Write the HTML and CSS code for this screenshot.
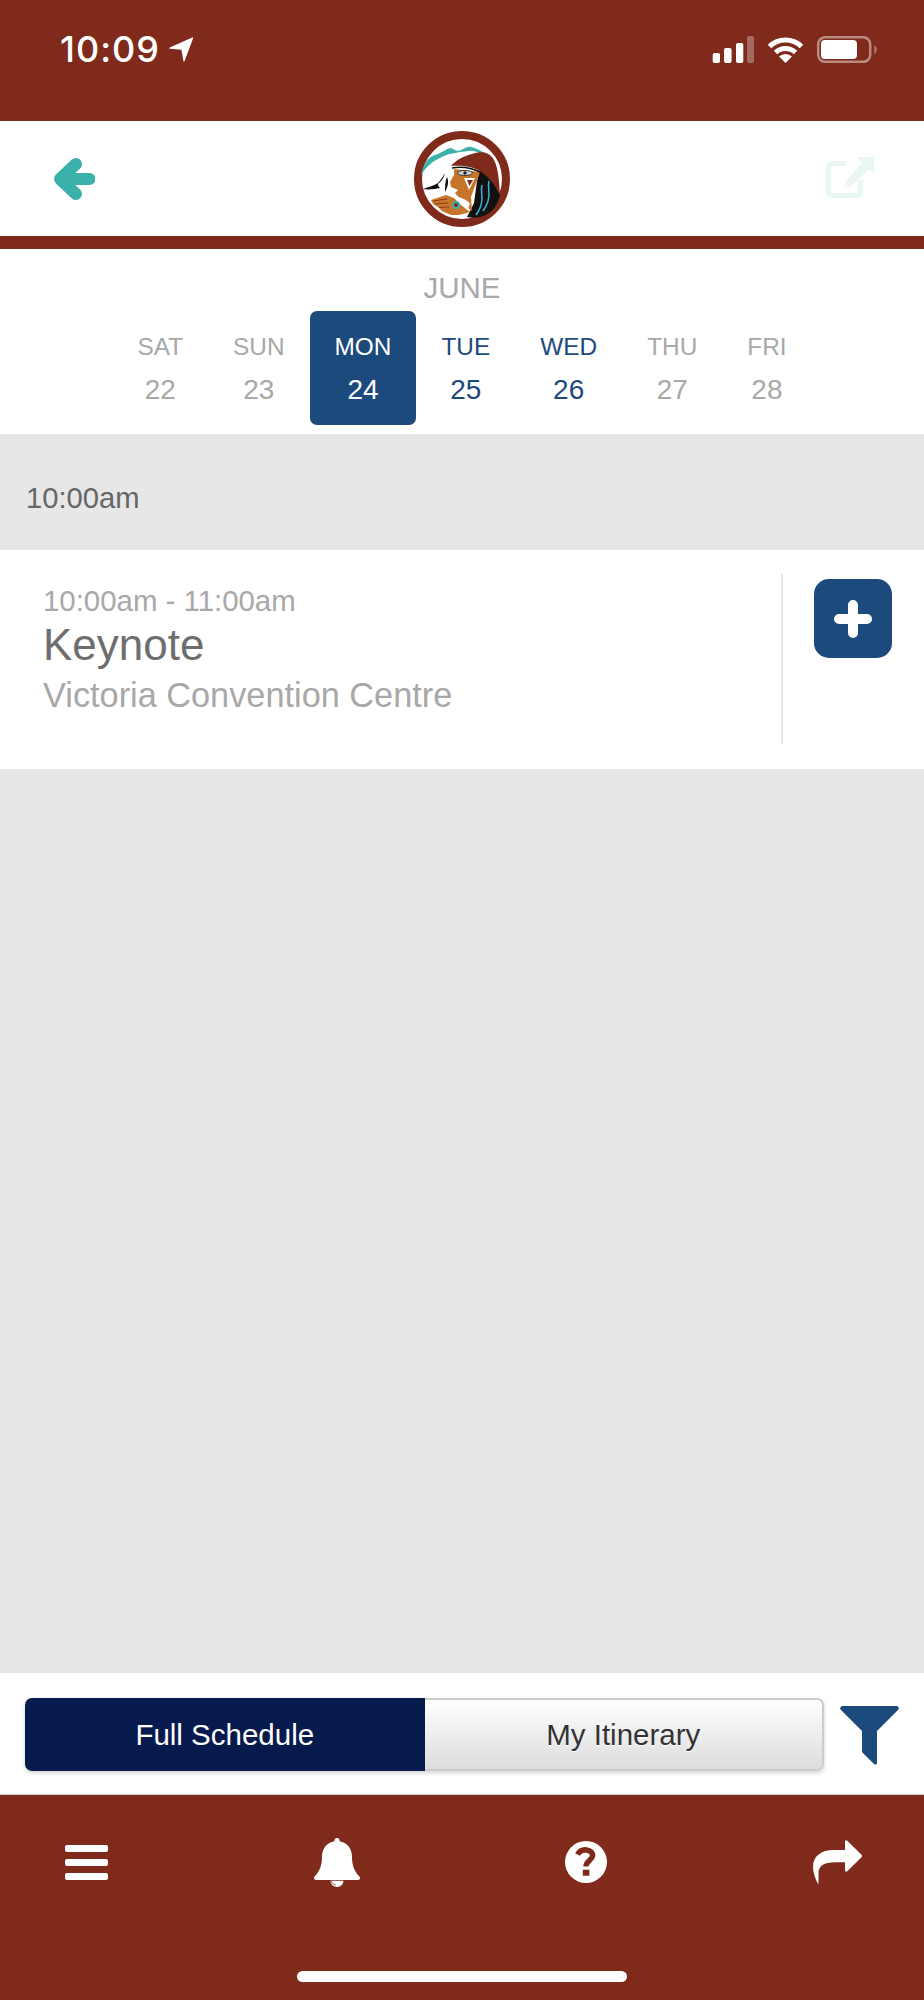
FILE: index.html
```html
<!DOCTYPE html>
<html lang="en">
<head>
<meta charset="utf-8">
<title>Schedule</title>
<link rel="stylesheet" href="styles.css">
</head>
<body>
<div class="app">
  <div class="status">
    <div class="status-left">
      <span class="clock">10:09</span>
      <svg class="loc" viewBox="0 0 24 25"><path d="M23.200 .4 Q24.400 .2 24 1.500 L15.600 24 Q14.800 25.500 14.400 24 L12.400 12.800 L1 11.800 Q-.6 11.400 .8 10.500Z"/></svg>
    </div>
    <svg class="status-right" viewBox="0 0 165 27">
      <rect class="w" x=".7" y="17" width="7.300" height="10" rx="2"/>
      <rect class="w" x="12" y="12" width="7.600" height="15" rx="2"/>
      <rect class="w" x="24" y="7" width="7.300" height="20" rx="2"/>
      <rect class="dim" x="35" y="0" width="7" height="27" rx="2"/>
      <path class="wifi" d="M57.500 10.500 A23 23 0 0 1 89.500 10.500"/>
      <path class="wifi" d="M63.500 16.500 A14.500 14.500 0 0 1 83.500 16.500"/>
      <path class="w" d="M67 20.500 A9.500 9.500 0 0 1 80 20.500 L73.500 27Z"/>
      <rect class="batt" x="106.200" y="1.200" width="52" height="24.600" rx="7"/>
      <rect class="w" x="109" y="4" width="36" height="19" rx="4"/>
      <path class="dim" d="M162 9 Q165 10.500 165 13.500 Q165 16.500 162 18Z"/>
    </svg>
  </div>

  <header class="topbar">
    <svg class="back" viewBox="0 0 41 44"><path d="M35.500 22 H6.500 M22 7 L6 22 L22 37"/></svg>
    <svg class="logo" viewBox="0 0 96 96">
      <circle class="logo-disc" cx="48" cy="48" r="44"/>
      <path class="logo-teal" d="M7 44 C9 34 14 26 21 24 C27 22 32 18 36 17 C39 17 41 20 44 20 C49 19 53 15 57 16 C62 17 68 20 74 24 L72 25 C66 22 60 19 54 20 C46 21 34 22 24 28 C16 32 11 38 7 44Z"/>
      <path class="logo-black" d="M9 58 C15 56 20 54.500 24 52 C27 49 29 45 31 42 C30 46 28 50 24 53 C24 55 25 56 26 57 C21 58 15 59 9 58Z"/>
      <path class="logo-black" d="M33 46 C35 50 34 56 31 61 C31 56 31 50 33 46Z"/>
      <path class="logo-black" d="M66 39 L80 48 L86 64 C84 74 78 82 69 85 C63 87 58 87 53 86 L60 72 L63 50Z"/>
      <path class="logo-blue" d="M68 54 C66 62 70 66 67 74 C66 78 64 81 62 84 M75 50 C73 58 77 62 74 70 C73 74 71 77 69 80"/>
      <path class="logo-orange" d="M40 38 L66 41 L62 52 L57 66 L58 80 L50 74 L47 69 L41 62 L44 59 L37 56 L36 51 L40 44Z"/>
      <path class="logo-hood" d="M37 35 C42 29 50 25 58 23 C66 20 74 21 78 26 C84 33 85 48 86 64 L83 59 C79 51 73 45 66 40 C58 35 47 34 37 35Z"/>
      <path class="logo-line" d="M38 37 C48 35 58 37 66 41"/>
      <ellipse class="logo-eye" cx="51" cy="42" rx="7.500" ry="2.500"/>
      <circle class="logo-pupil" cx="51" cy="42" r="1.700"/>
      <path class="logo-cheek" d="M50 47 H61 L55 59Z"/>
      <path class="logo-tri" d="M53 49 H59 L55.500 55Z"/>
      <path class="logo-white" d="M30 62 C38 62 44 66 50 68 L56 72 L54 78 L44 76 L34 70Z"/>
      <path class="logo-orange" d="M17 69 L32 64 L40 67 L47 74 L56 81 L45 84 L37 84 L28 80 L24 76 L19 73Z"/>
      <path class="logo-finger" d="M19 70 L33 68 M21 73 L34 72 M25 76.500 L35 76"/>
      <circle class="logo-palm" cx="42" cy="74" r="4"/>
      <circle class="logo-palm-in" cx="42" cy="74" r="2"/>
    </svg>
    <svg class="external" viewBox="0 0 48 41"><path class="ext-box" d="M20 6.500 H7 Q2.500 6.500 2.500 11 V34 Q2.500 38.500 7 38.500 H30 Q34.500 38.500 34.500 34 V23"/><path class="ext-arrow" d="M31 0 H48 V17 L43 12 L23.500 31 L18.500 26 L36 6Z"/></svg>
  </header>
  <div class="rule"></div>

  <section class="calendar">
    <div class="month">JUNE</div>
    <div class="days">
      <div class="day"><span class="dow">SAT</span><span class="num">22</span></div>
      <div class="day"><span class="dow">SUN</span><span class="num">23</span></div>
      <div class="day day-selected"><span class="dow">MON</span><span class="num">24</span></div>
      <div class="day day-active"><span class="dow">TUE</span><span class="num">25</span></div>
      <div class="day day-active"><span class="dow">WED</span><span class="num">26</span></div>
      <div class="day"><span class="dow">THU</span><span class="num">27</span></div>
      <div class="day"><span class="dow">FRI</span><span class="num">28</span></div>
    </div>
  </section>

  <main class="schedule">
    <div class="slot">10:00am</div>
    <article class="session">
      <div class="session-text">
        <div class="session-time">10:00am - 11:00am</div>
        <div class="session-title">Keynote</div>
        <div class="session-place">Victoria Convention Centre</div>
      </div>
      <div class="session-action">
        <div class="add"><svg class="plus" viewBox="0 0 38 38"><path d="M19 5 V33 M5 19 H33"/></svg></div>
      </div>
    </article>
  </main>

  <div class="filterbar">
    <div class="segments">
      <div class="seg seg-on">Full Schedule</div>
      <div class="seg seg-off">My Itinerary</div>
    </div>
    <svg class="funnel" viewBox="0 0 59 59"><path d="M2 0 H57 Q60 1.500 58 4 L37 25 V57 Q36 60 34 58 L22 46 V25 L1 4 Q-1 1.500 2 0Z"/></svg>
  </div>

  <footer class="tabbar">
    <div class="tabs">
      <div class="burger"><span></span><span></span><span></span></div>
      <svg class="bell" viewBox="0 0 46 49">
        <path d="M23 0 A2.500 2.500 0 0 1 25.500 3.200 C33 4.500 38 10 38 19 C38 28 41 34 45 38 Q47.500 41.500 44 42 H2 Q-1.500 41.500 1 38 C5 34 8 28 8 19 C8 10 13 4.500 20.500 3.200 A2.500 2.500 0 0 1 23 0Z"/>
        <path d="M16.500 42.800 H29.500 A6.500 6.200 0 0 1 16.500 42.800Z"/>
        <path class="bell-arc" d="M17.500 43 C18 45.500 20 47 22 47"/>
      </svg>
      <svg class="help" viewBox="0 0 42 42">
        <circle class="help-disc" cx="21" cy="21" r="21"/>
        <path class="help-mark" d="M12.500 13.500 C14.500 10 18 8.500 21.500 9 C25.500 9.500 28 12 27.500 15 C27 19.500 21 19.500 21 25.500"/>
        <rect class="help-dot" x="17.800" y="28.700" width="6.600" height="6"/>
      </svg>
      <svg class="share" viewBox="0 0 49 45"><path d="M32 1.500 Q32.500 -.5 34.500 1 L48.300 14.500 Q49.700 16 48.300 17.500 L34.500 31 Q32.500 32.500 32 30.500 V22.300 H22 C11 22.300 5.500 26 5.500 33 C5.500 37 5.700 40 5.300 44.500 C2 38.500 0 32 0 27 C0 16 8 10 21 10 H32Z"/></svg>
    </div>
    <div class="home"></div>
  </footer>
</div>
</body>
</html>
```

FILE: styles.css
```css
* { box-sizing: border-box; }

html, body { margin: 0; padding: 0; }

body {
  background: #fff;
  font-family: "Liberation Sans", Arial, sans-serif;
}

.app {
  width: 924px;
  height: 2000px;
  display: flex;
  flex-direction: column;
  overflow: hidden;
}

/* status bar */
.status {
  height: 121px;
  flex: none;
  background: #7f2a1a;
  display: flex;
  justify-content: space-between;
  align-items: flex-start;
  padding: 36px 47px 0 60px;
}

.status-left { display: flex; align-items: center; gap: 9px; height: 27px; }

.clock {
  font-family: Inter, sans-serif;
  font-weight: 500;
  font-size: 36px;
  line-height: 27px;
  letter-spacing: 1px;
  color: #fff;
}

.loc { width: 24px; height: 25px; fill: #fff; }
.status-right { width: 165px; height: 27px; }
.w { fill: #fff; }
.dim { fill: #fff; opacity: .3; }
.wifi { fill: none; stroke: #fff; stroke-width: 5; }
.batt { fill: none; stroke: #fff; stroke-width: 2.500; opacity: .45; }

/* header */
.topbar {
  height: 115px;
  flex: none;
  background: #fff;
  display: grid;
  grid-template-columns: 1fr auto 1fr;
  align-items: center;
  padding: 0 50px;
}

.back { width: 41px; height: 44px; margin-left: 4px; fill: none; stroke: #3ab1a9; stroke-width: 12; stroke-linecap: round; stroke-linejoin: round; }
.logo { width: 96px; height: 96px; margin-top: 1px; }
.external { width: 48px; height: 41px; justify-self: end; margin-bottom: 2px; }
.ext-box { fill: none; stroke: #e9f6f4; stroke-width: 5; }
.ext-arrow { fill: #e9f6f4; }

.logo-disc { fill: #fff; stroke: #7f2a1a; stroke-width: 8; }
.logo-teal { fill: #3ab1a9; }
.logo-black { fill: #111; }
.logo-blue { fill: none; stroke: #37b4d6; stroke-width: 1.500; }
.logo-orange { fill: #c7752a; }
.logo-hood { fill: #7f2a1a; }
.logo-line { fill: none; stroke: #111; stroke-width: 1.500; }
.logo-eye { fill: #c9d4d6; stroke: #222; stroke-width: .8; }
.logo-pupil { fill: #222; }
.logo-cheek { fill: #fff; }
.logo-tri { fill: #7f2a1a; }
.logo-white { fill: #fff; }
.logo-finger { fill: none; stroke: #7f2a1a; stroke-width: .8; }
.logo-palm { fill: #3ab1a9; }
.logo-palm-in { fill: #7f2a1a; }

.rule { height: 13px; flex: none; background: #7f2a1a; }

/* calendar */
.calendar {
  height: 185px;
  flex: none;
  background: #fff;
  padding-top: 22px;
}

.month {
  font-size: 29.500px;
  line-height: 34px;
  text-align: center;
  color: #a8a8a8;
  margin-bottom: 6px;
}

.days { display: flex; justify-content: center; }

.day {
  height: 114px;
  padding: 21px 25px 0;
  display: flex;
  flex-direction: column;
  align-items: center;
  color: #a8a8a8;
  border-radius: 7px;
}

.dow { font-size: 24.400px; line-height: 30px; }
.num { font-size: 28px; line-height: 32px; margin-top: 12px; }
.day-selected { background: #1d4a7c; color: #fff; }
.day-active { color: #1d4a7c; }

/* schedule */
.schedule { flex: 1; background: #e7e7e7; }

.slot {
  padding: 48px 26px 35px;
  font-size: 29.200px;
  line-height: 33px;
  color: #666;
}

.session {
  height: 219px;
  background: #fff;
  display: flex;
  padding: 24px 0 25px 43px;
}

.session-text { flex: 1; padding-top: 11px; }
.session-time { font-size: 29.400px; line-height: 32px; color: #a8a8a8; }
.session-title { font-size: 44px; line-height: 50px; margin-top: 3px; color: #6e6e6e; }
.session-place { font-size: 34.300px; line-height: 38px; margin-top: 6px; color: #a8a8a8; }

.session-action {
  width: 143px;
  flex: none;
  border-left: 2px solid #e8e8e8;
  padding: 5px 0 0 31px;
}

.add {
  width: 78px;
  height: 79px;
  border-radius: 15px;
  background: #1d4a7c;
  display: flex;
  align-items: center;
  justify-content: center;
}

.plus { width: 38px; height: 38px; fill: none; stroke: #fff; stroke-width: 10; stroke-linecap: round; }

/* filter bar */
.filterbar {
  height: 122px;
  flex: none;
  background: #fff;
  border-bottom: 1px solid #ccc;
  display: flex;
  align-items: flex-start;
  padding: 25px 0 0 25px;
}

.segments {
  display: flex;
  width: 799px;
  height: 73px;
  border-radius: 7px;
  box-shadow: 0 2px 4px rgba(0, 0, 0, .18);
}

.seg {
  width: 50%;
  display: flex;
  align-items: center;
  justify-content: center;
  font-size: 29.500px;
}

.seg-on {
  background: #071a4e;
  color: #fff;
  border-radius: 7px 0 0 7px;
}

.seg-off {
  background: linear-gradient(#fff, #dcdcdc);
  color: #333;
  border: 2px solid #ccc;
  border-left: 0;
  border-radius: 0 7px 7px 0;
  text-shadow: 0 1px 0 #fff;
}

.funnel { width: 59px; height: 59px; margin: 8px 0 0 16px; fill: #1d4a7c; }

/* tab bar */
.tabbar {
  height: 205px;
  flex: none;
  background: #7f2a1a;
  padding-top: 42px;
}

.tabs {
  display: flex;
  justify-content: space-between;
  align-items: center;
  height: 50px;
  padding: 0 62px 0 65px;
}

.burger { width: 43px; display: flex; flex-direction: column; gap: 7px; }
.burger span { display: block; height: 7px; border-radius: 2px; background: #fff; }

.bell { width: 46px; height: 49px; fill: #fff; }
.bell-arc { fill: none; stroke: #7f2a1a; stroke-width: .8; }
.help { width: 42px; height: 42px; }
.help-disc { fill: #fff; }
.help-mark { fill: none; stroke: #7f2a1a; stroke-width: 5.500; }
.help-dot { fill: #7f2a1a; }
.share { width: 49px; height: 45px; fill: #fff; }

.home {
  width: 330px;
  height: 11px;
  margin: 84px auto 0;
  border-radius: 6px;
  background: #fff;
}
```
